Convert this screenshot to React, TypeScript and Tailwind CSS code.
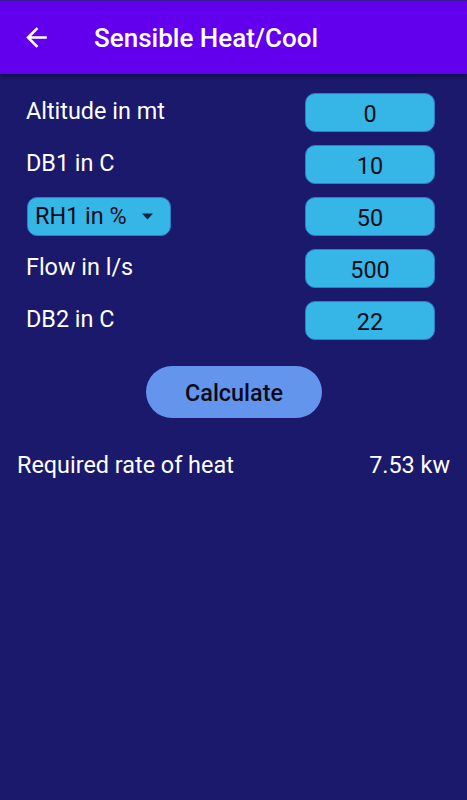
import { useState } from 'react';

const rows = [
  { label: 'Altitude in mt', value: '0' },
  { label: 'DB1 in C', value: '10' },
  { label: 'RH1 in %', value: '50', select: true },
  { label: 'Flow in l/s', value: '500' },
  { label: 'DB2 in C', value: '22' },
];

function BackArrow() {
  return (
    <svg width="31" height="31" viewBox="0 0 24 24" fill="white">
      <path d="M20 11H7.83l5.59-5.59L12 4l-8 8 8 8 1.41-1.41L7.83 13H20v-2z" />
    </svg>
  );
}

export default function App() {
  const [vals, setVals] = useState(rows.map(r => r.value));

  return (
    <div className="min-h-[800px] bg-[#1a196c] text-white" style={{ fontFamily: 'Roboto, "Liberation Sans", sans-serif' }}>
      <div className="h-[74px] bg-[#6200ee] border-t border-[#3a1a9a] flex items-center shadow-[0_2px_4px_rgba(0,0,0,0.4)]">
        <div className="ml-[21px] mr-[42px] -mt-[1px] flex items-center"><BackArrow /></div>
        <h1 className="text-[26px] font-medium mt-[2px]">Sensible Heat/Cool</h1>
      </div>

      <div className="pt-[19px]">
        {rows.map((r, i) => (
          <div key={r.label} className="flex items-center justify-between h-[39px] mb-[13px] pl-[26px] pr-[32px]">
            {r.select ? (
              <div className="flex items-center h-[39px] w-[144px] ml-px rounded-[10px] bg-[#35b6e6] border border-[#2c7fc0] text-[#0b0b1a] text-[23.4px] pl-[7px]">
                <span>{r.label}</span>
                <svg className="ml-[14px]" width="13" height="7" viewBox="0 0 12 7"><path d="M0.5 0.5h11L6 6.5z" fill="#10243a" /></svg>
              </div>
            ) : (
              <span className="text-[23.4px] -mt-[2px]">{r.label}</span>
            )}
            <input
              value={vals[i]}
              onChange={e => setVals(vals.map((v, j) => (j === i ? e.target.value : v)))}
              className="w-[130px] h-[39px] rounded-[10px] bg-[#35b6e6] border border-[#2c7fc0] text-center text-[23.4px] text-[#0b0b1a] outline-none pt-[2px]"
            />
          </div>
        ))}
      </div>

      <div className="flex justify-center mt-[26px] ml-[1px]">
        <button className="w-[176px] h-[52px] rounded-full bg-[#6495ed] text-[#0b0b1a] text-[23.4px] font-medium pt-[4px]">Calculate</button>
      </div>

      <div className="flex items-center justify-between pl-[17px] pr-[17px] mt-[30px] text-[23.4px]">
        <span>Required rate of heat</span>
        <span>7.53 kw</span>
      </div>
    </div>
  );
}
